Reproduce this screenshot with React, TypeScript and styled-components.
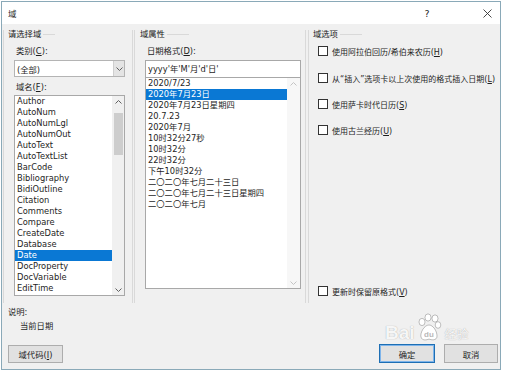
import styled, { createGlobalStyle } from 'styled-components';

const GlobalStyle = createGlobalStyle`
  html, body {
    margin: 0;
    padding: 0;
    background: #fff;
  }
  body {
    font-family: "DejaVu Sans", "Noto Sans CJK SC", sans-serif;
    font-size: 8.3px;
    color: #1e1e1e;
  }
`;

const fieldNames = [
  'Author',
  'AutoNum',
  'AutoNumLgl',
  'AutoNumOut',
  'AutoText',
  'AutoTextList',
  'BarCode',
  'Bibliography',
  'BidiOutline',
  'Citation',
  'Comments',
  'Compare',
  'CreateDate',
  'Database',
  'Date',
  'DocProperty',
  'DocVariable',
  'EditTime',
];

const dateFormats = [
  '2020/7/23',
  '2020年7月23日',
  '2020年7月23日星期四',
  '20.7.23',
  '2020年7月',
  '10时32分27秒',
  '10时32分',
  '22时32分',
  '下午10时32分',
  '二〇二〇年七月二十三日',
  '二〇二〇年七月二十三日星期四',
  '二〇二〇年七月',
];

const options = [
  { text: '使用阿拉伯回历/希伯来农历', key: 'H' },
  { text: '从“插入”选项卡以上次使用的格式插入日期', key: 'L' },
  { text: '使用萨卡时代日历', key: 'S' },
  { text: '使用古兰经历', key: 'U' },
];

const Window = styled.div`
  position: relative;
  width: 498px;
  height: 367px;
  margin: 1px 0 0 1px;
  border: 1px solid #8aa9b8;
  display: flex;
  flex-direction: column;
  background: #f0f0f0;
  overflow: hidden;
`;

const TitleBar = styled.div`
  height: 22px;
  flex: none;
  display: flex;
  align-items: center;
  background: #fff;
  padding-left: 6px;
`;

const Title = styled.span`
  flex: 1;
  font-size: 8.5px;
`;

const TitleButton = styled.div<{ $w: number }>`
  width: ${({ $w }) => $w}px;
  height: 22px;
  display: flex;
  align-items: center;
  justify-content: center;
  font-size: 9.5px;
  color: #222;
`;

const Columns = styled.div`
  height: 279px;
  flex: none;
  display: flex;
  padding-top: 6px;
  box-sizing: border-box;
`;

const Group = styled.div<{ $w?: number; $ml: number; $right?: boolean }>`
  ${({ $w }) => ($w ? `width: ${$w}px;` : 'flex: 1;')}
  flex-shrink: 0;
  margin-left: ${({ $ml }) => $ml}px;
  box-sizing: border-box;
  border-left: 1px solid #d9d9d9;
  border-right: ${({ $right }) => ($right ? '1px solid #d9d9d9' : 'none')};
  display: flex;
  flex-direction: column;
`;

const Legend = styled.div<{ $pl: number; $line: number }>`
  height: 8px;
  line-height: 8px;
  padding-left: ${({ $pl }) => $pl}px;
  display: flex;
  align-items: center;
  gap: 2px;
  color: #1a1a1a;

  &::after {
    content: '';
    width: ${({ $line }) => $line}px;
    height: 1px;
    background: #d9d9d9;
  }
`;

const Inner = styled.div<{ $pl: number; $pr: number }>`
  flex: 1;
  display: flex;
  flex-direction: column;
  padding: 0 ${({ $pr }) => $pr}px 0 ${({ $pl }) => $pl}px;
`;

const Label = styled.div<{ $mt: number; $pl?: number }>`
  height: 12px;
  line-height: 12px;
  margin-top: ${({ $mt }) => $mt}px;
  padding-left: ${({ $pl }) => $pl ?? 2}px;
  white-space: nowrap;
`;

const Combo = styled.div`
  height: 17px;
  margin-top: 3px;
  box-sizing: border-box;
  border: 1px solid #b4b4b4;
  background: #fff;
  display: flex;
  align-items: center;
  padding-left: 2px;
`;

const ComboText = styled.span`
  flex: 1;
`;

const ComboArrow = styled.div`
  width: 11px;
  height: 15px;
  box-sizing: border-box;
  background: #e4e4e4;
  border-left: 1px solid #cfcfcf;
  display: flex;
  align-items: center;
  justify-content: center;
`;

const ListBox = styled.div<{ $h: number; $mt: number }>`
  height: ${({ $h }) => $h}px;
  margin-top: ${({ $mt }) => $mt}px;
  box-sizing: border-box;
  border: 1px solid #a8a8a8;
  background: #fff;
  display: flex;
`;

const Items = styled.div`
  flex: 1;
  display: flex;
  flex-direction: column;
  overflow: hidden;
`;

const Item = styled.div<{ $selected?: boolean }>`
  height: 11px;
  line-height: 11px;
  flex: none;
  padding-left: 2px;
  white-space: nowrap;
  background: ${({ $selected }) => ($selected ? '#0a78d4' : 'transparent')};
  color: ${({ $selected }) => ($selected ? '#fff' : 'inherit')};
`;

const ScrollBar = styled.div<{ $w: number; $disabled?: boolean }>`
  width: ${({ $w }) => $w}px;
  flex: none;
  background: ${({ $disabled }) => ($disabled ? '#f7f7f7' : '#f0f0f0')};
  display: flex;
  flex-direction: column;
  align-items: center;
`;

const ArrowCell = styled.div`
  height: 11px;
  width: 100%;
  flex: none;
  display: flex;
  align-items: center;
  justify-content: center;
`;

const Thumb = styled.div`
  width: 9px;
  height: 42px;
  margin-top: 6px;
  background: #cdcdcd;
`;

const Spacer = styled.div`
  flex: 1;
`;

const TextInput = styled.div`
  height: 17px;
  margin-top: 3px;
  box-sizing: border-box;
  border: 1px solid #a8a8a8;
  border-bottom: none;
  background: #fff;
  line-height: 16px;
  padding-left: 2px;
  white-space: nowrap;
`;

const CheckRow = styled.label<{ $mt: string; $mb?: number }>`
  height: 12px;
  margin-top: ${({ $mt }) => $mt};
  margin-bottom: ${({ $mb }) => $mb ?? 0}px;
  display: flex;
  align-items: center;
  gap: 4px;
  white-space: nowrap;
  font-size: 8px;
`;

const Box = styled.span`
  width: 10px;
  height: 10px;
  box-sizing: border-box;
  border: 1px solid #333;
  background: #fff;
  flex: none;
`;

const Footer = styled.div`
  flex: 1;
  display: flex;
  justify-content: space-between;
  align-items: flex-end;
  padding: 3px 2px 6px 6px;
`;

const FooterLeft = styled.div`
  display: flex;
  flex-direction: column;
  align-items: flex-start;
  height: 100%;
`;

const Button = styled.button<{ $w: number; $h: number; $default?: boolean }>`
  width: ${({ $w }) => $w}px;
  height: ${({ $h }) => $h}px;
  box-sizing: border-box;
  padding: 0;
  font: inherit;
  color: inherit;
  background: #e1e1e1;
  border: 1px solid ${({ $default }) => ($default ? '#1e6fb4' : '#adadad')};
  box-shadow: ${({ $default }) => ($default ? 'inset 0 0 0 1px #7eb4ea' : 'none')};
`;

const FieldCodeButton = styled(Button)`
  margin-top: auto;
`;

const ButtonRow = styled.div`
  display: flex;
  gap: 9px;
`;

const Watermark = styled.div`
  position: absolute;
  left: 383px;
  top: 311px;
  display: flex;
  align-items: flex-end;
  gap: 1px;
  color: rgba(255, 255, 255, 0.92);
  text-shadow: 0 0 1px rgba(0, 0, 0, 0.35);
  pointer-events: none;
`;

const MarkLatin = styled.span`
  font-family: "Liberation Sans", sans-serif;
  font-weight: bold;
  font-size: 19px;
  line-height: 20px;
`;

const MarkCjk = styled.span`
  font-family: "Noto Sans CJK SC", sans-serif;
  font-size: 12px;
  line-height: 18px;
  margin-left: 2px;
`;

const Chevron = ({ up, color = '#606060' }: { up?: boolean; color?: string }) => (
  <svg width="7" height="4" viewBox="0 0 7 4">
    <polyline
      points={up ? '0.5,3.5 3.5,0.5 6.5,3.5' : '0.5,0.5 3.5,3.5 6.5,0.5'}
      fill="none"
      stroke={color}
      strokeWidth="1"
    />
  </svg>
);

const Paw = () => (
  <svg width="26" height="30" viewBox="0 0 26 30">
    <g fill="#fff" stroke="rgba(0,0,0,0.3)" strokeWidth="0.8">
      <ellipse cx="6" cy="9" rx="3" ry="3.6" />
      <ellipse cx="12" cy="4.5" rx="3" ry="3.6" />
      <ellipse cx="19" cy="5.5" rx="3" ry="3.6" />
      <ellipse cx="22" cy="12" rx="2.8" ry="3.3" />
      <path d="M13 12 C8 12 4 20 5 24 C6 28 11 27 13 26 C15 27 21 28 21 23 C21 18 17 12 13 12 Z" />
    </g>
    <text x="13" y="24" fontSize="8" textAnchor="middle" fill="rgba(0,0,0,0.25)" fontFamily="Liberation Sans, sans-serif" fontWeight="bold">
      du
    </text>
  </svg>
);

const Key = ({ k }: { k: string }) => (
  <>
    (<u>{k}</u>)
  </>
);

export default function App() {
  return (
    <>
      <GlobalStyle />
      <Window>
        <TitleBar>
          <Title>域</Title>
          <TitleButton $w={34}>?</TitleButton>
          <TitleButton $w={30} />
          <TitleButton $w={26}>
            <svg width="9" height="9" viewBox="0 0 9 9">
              <path d="M0.5 0.5 L8.5 8.5 M8.5 0.5 L0.5 8.5" stroke="#333" strokeWidth="0.9" />
            </svg>
          </TitleButton>
        </TitleBar>

        <Columns>
          <Group $w={130} $ml={1} $right>
            <Legend $pl={4} $line={12}>请选择域</Legend>
            <Inner $pl={10} $pr={7}>
              <Label $mt={7}>
                类别<Key k="C" />:
              </Label>
              <Combo>
                <ComboText>(全部)</ComboText>
                <ComboArrow>
                  <Chevron />
                </ComboArrow>
              </Combo>
              <Label $mt={4}>
                域名<Key k="F" />:
              </Label>
              <ListBox $h={201} $mt={2}>
                <Items>
                  {fieldNames.map((name) => (
                    <Item key={name} $selected={name === 'Date'}>
                      {name}
                    </Item>
                  ))}
                </Items>
                <ScrollBar $w={12}>
                  <ArrowCell>
                    <Chevron up />
                  </ArrowCell>
                  <Thumb />
                  <Spacer />
                  <ArrowCell>
                    <Chevron />
                  </ArrowCell>
                </ScrollBar>
              </ListBox>
            </Inner>
          </Group>

          <Group $w={172} $ml={1} $right>
            <Legend $pl={5} $line={22}>域属性</Legend>
            <Inner $pl={10} $pr={4}>
              <Label $mt={7}>
                日期格式<Key k="D" />:
              </Label>
              <TextInput>yyyy'年'M'月'd'日'</TextInput>
              <ListBox $h={212} $mt={0}>
                <Items>
                  {dateFormats.map((f) => (
                    <Item key={f} $selected={f === '2020年7月23日'}>
                      {f}
                    </Item>
                  ))}
                </Items>
                <ScrollBar $w={13} $disabled>
                  <ArrowCell>
                    <Chevron up color="#c4c4c4" />
                  </ArrowCell>
                  <Spacer />
                  <ArrowCell>
                    <Chevron color="#c4c4c4" />
                  </ArrowCell>
                </ScrollBar>
              </ListBox>
            </Inner>
          </Group>

          <Group $ml={2}>
            <Legend $pl={4} $line={22}>域选项</Legend>
            <Inner $pl={9} $pr={0}>
              {options.map((o, i) => (
                <CheckRow key={o.key} $mt={i === 0 ? '7px' : i === 1 ? '15px' : '14px'}>
                  <Box />
                  <span>
                    {o.text}
                    <Key k={o.key} />
                  </span>
                </CheckRow>
              ))}
              <CheckRow $mt="auto" $mb={6}>
                <Box />
                <span>
                  更新时保留原格式<Key k="V" />
                </span>
              </CheckRow>
            </Inner>
          </Group>
        </Columns>

        <Footer>
          <FooterLeft>
            <Label $mt={0} $pl={0}>
              说明:
            </Label>
            <Label $mt={2} $pl={12}>
              当前日期
            </Label>
            <FieldCodeButton $w={55} $h={18}>
              域代码<Key k="I" />
            </FieldCodeButton>
          </FooterLeft>
          <ButtonRow>
            <Button $w={56} $h={19} $default>
              确定
            </Button>
            <Button $w={54} $h={19}>
              取消
            </Button>
          </ButtonRow>
        </Footer>

        <Watermark>
          <MarkLatin>Bai</MarkLatin>
          <Paw />
          <MarkCjk>经验</MarkCjk>
        </Watermark>
      </Window>
    </>
  );
}
